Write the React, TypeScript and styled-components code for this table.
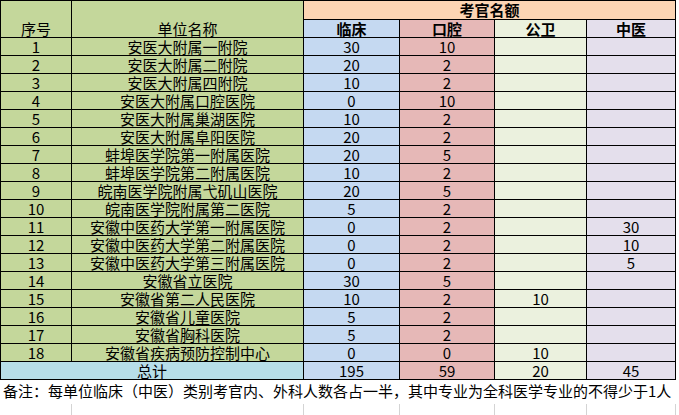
import styled, { createGlobalStyle } from "styled-components"

type Unit = {
  no: number
  name: string
  clinic: string
  oral: string
  publicHealth: string
  chinese: string
}

const units: Unit[] = [
  { no: 1, name: '安医大附属一附院', clinic: '30', oral: '10', publicHealth: '', chinese: '' },
  { no: 2, name: '安医大附属二附院', clinic: '20', oral: '2', publicHealth: '', chinese: '' },
  { no: 3, name: '安医大附属四附院', clinic: '10', oral: '2', publicHealth: '', chinese: '' },
  { no: 4, name: '安医大附属口腔医院', clinic: '0', oral: '10', publicHealth: '', chinese: '' },
  { no: 5, name: '安医大附属巢湖医院', clinic: '10', oral: '2', publicHealth: '', chinese: '' },
  { no: 6, name: '安医大附属阜阳医院', clinic: '20', oral: '2', publicHealth: '', chinese: '' },
  { no: 7, name: '蚌埠医学院第一附属医院', clinic: '20', oral: '5', publicHealth: '', chinese: '' },
  { no: 8, name: '蚌埠医学院第二附属医院', clinic: '10', oral: '2', publicHealth: '', chinese: '' },
  { no: 9, name: '皖南医学院附属弋矶山医院', clinic: '20', oral: '5', publicHealth: '', chinese: '' },
  { no: 10, name: '皖南医学院附属第二医院', clinic: '5', oral: '2', publicHealth: '', chinese: '' },
  { no: 11, name: '安徽中医药大学第一附属医院', clinic: '0', oral: '2', publicHealth: '', chinese: '30' },
  { no: 12, name: '安徽中医药大学第二附属医院', clinic: '0', oral: '2', publicHealth: '', chinese: '10' },
  { no: 13, name: '安徽中医药大学第三附属医院', clinic: '0', oral: '2', publicHealth: '', chinese: '5' },
  { no: 14, name: '安徽省立医院', clinic: '30', oral: '5', publicHealth: '', chinese: '' },
  { no: 15, name: '安徽省第二人民医院', clinic: '10', oral: '2', publicHealth: '10', chinese: '' },
  { no: 16, name: '安徽省儿童医院', clinic: '5', oral: '2', publicHealth: '', chinese: '' },
  { no: 17, name: '安徽省胸科医院', clinic: '5', oral: '2', publicHealth: '', chinese: '' },
  { no: 18, name: '安徽省疾病预防控制中心', clinic: '0', oral: '0', publicHealth: '10', chinese: '' },
]

const colors = {
  unit: '#c4d79b',
  quota: '#fcd5b4',
  clinic: '#c5d9f1',
  oral: '#e6b8b7',
  publicHealth: '#ebf1de',
  chinese: '#e4dfec',
  total: '#b7dee8',
}

const GlobalStyle = createGlobalStyle`
  html, body {
    margin: 0;
    padding: 0;
    background: #fff;
  }
  body {
    font-family: "Noto Sans CJK SC", "Noto Sans", sans-serif;
    color: #000;
  }
`

const COLUMNS = '71px 232px 96px 95px 92px 89px'

const Sheet = styled.div`
  width: 679px;
  height: 415px;
  overflow: hidden;
  background: #fff;
`

const Table = styled.div`
  display: grid;
  grid-template-columns: ${COLUMNS};
  grid-template-rows: 19px 18px;
  grid-auto-rows: 18px;
  width: max-content;
  border-top: 1px solid #000;
  border-left: 1px solid #000;
`

type CellProps = {
  $bg: string
  $span?: number
  $rows?: number
  $bold?: boolean
  $align?: 'center' | 'end'
}

const Cell = styled.div<CellProps>`
  box-sizing: border-box;
  display: flex;
  justify-content: center;
  align-items: ${({ $align }) => $align === 'end' ? 'flex-end' : 'center'};
  grid-column: span ${({ $span }) => $span ?? 1};
  grid-row: span ${({ $rows }) => $rows ?? 1};
  background: ${({ $bg }) => $bg};
  border-right: 1px solid #000;
  border-bottom: 1px solid #000;
  font-size: 15px;
  line-height: 16px;
  font-weight: ${({ $bold }) => $bold ? 700 : 400};
  white-space: nowrap;
`

const Note = styled.div`
  height: 23px;
  padding: 1px 0 0 3px;
  font-size: 15px;
  line-height: 20px;
  white-space: nowrap;
`

const Gridlines = styled.div`
  display: grid;
  grid-template-columns: ${COLUMNS};
  margin-left: 1px;
  height: 20px;
`

const GridCell = styled.div`
  border-right: 1px solid #d4d4d4;
`

export default function App() {
  return (
    <Sheet>
      <GlobalStyle />
      <Table>
        <Cell $bg={colors.unit} $rows={2} $align="end">序号</Cell>
        <Cell $bg={colors.unit} $rows={2} $align="end">单位名称</Cell>
        <Cell $bg={colors.quota} $span={4} $bold>考官名额</Cell>
        <Cell $bg={colors.clinic} $bold>临床</Cell>
        <Cell $bg={colors.oral} $bold>口腔</Cell>
        <Cell $bg={colors.publicHealth} $bold>公卫</Cell>
        <Cell $bg={colors.chinese} $bold>中医</Cell>

        {units.map((unit) => (
          <Row key={unit.no} unit={unit} />
        ))}

        <Cell $bg={colors.total} $span={2} $align="end">总计</Cell>
        <Cell $bg={colors.clinic}>195</Cell>
        <Cell $bg={colors.oral}>59</Cell>
        <Cell $bg={colors.publicHealth}>20</Cell>
        <Cell $bg={colors.chinese}>45</Cell>
      </Table>
      <Note>备注：每单位临床（中医）类别考官内、外科人数各占一半，其中专业为全科医学专业的不得少于1人</Note>
      <Gridlines>
        {Array.from({ length: 6 }).map((_, index) => (
          <GridCell key={index} />
        ))}
      </Gridlines>
    </Sheet>
  )
}

function Row({ unit }: { unit: Unit }) {
  return (
    <>
      <Cell $bg={colors.unit}>{unit.no}</Cell>
      <Cell $bg={colors.unit}>{unit.name}</Cell>
      <Cell $bg={colors.clinic}>{unit.clinic}</Cell>
      <Cell $bg={colors.oral}>{unit.oral}</Cell>
      <Cell $bg={colors.publicHealth}>{unit.publicHealth}</Cell>
      <Cell $bg={colors.chinese}>{unit.chinese}</Cell>
    </>
  )
}
